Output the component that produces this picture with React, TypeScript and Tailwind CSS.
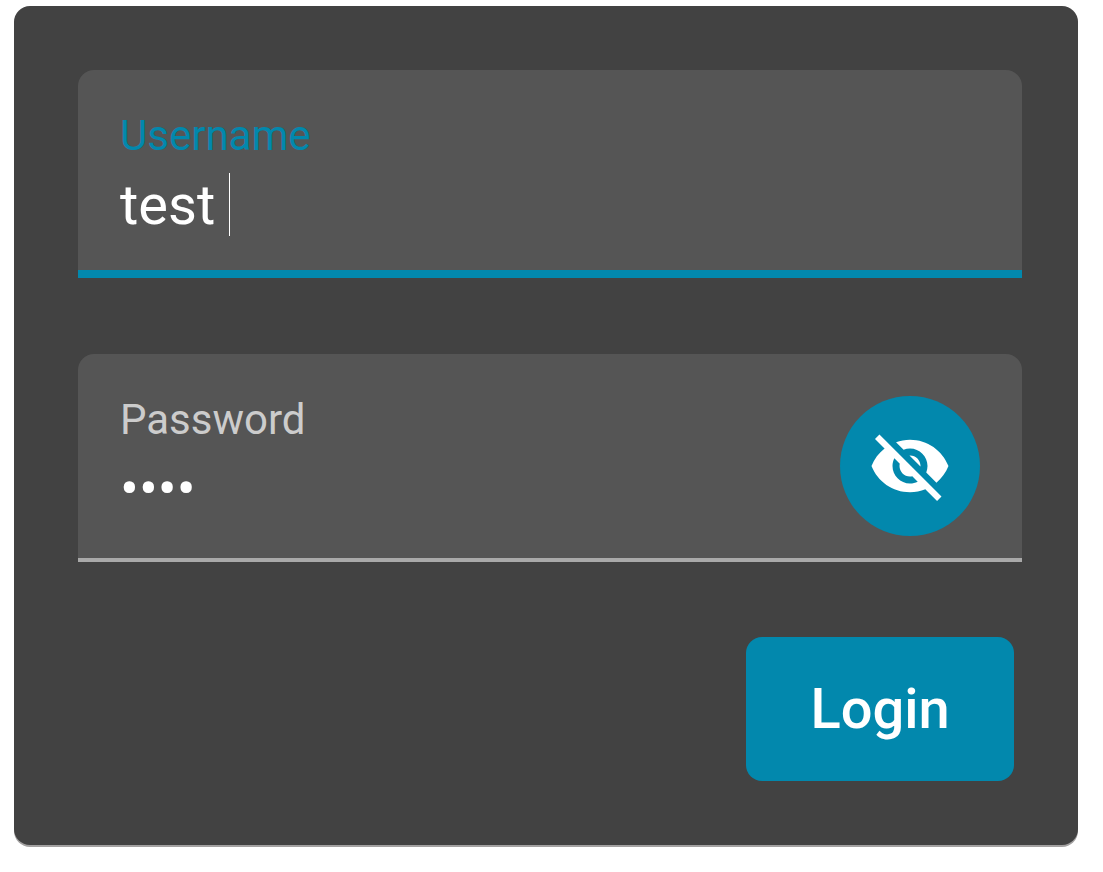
import { useState } from "react";
import type { FormEvent } from "react";

function VisibilityOffIcon() {
  return (
    <svg viewBox="0 0 24 24" className="size-21 fill-white" aria-hidden="true">
      <path d="M12 7c2.76 0 5 2.24 5 5 0 .65-.13 1.26-.36 1.83l2.92 2.92c1.51-1.26 2.7-2.89 3.43-4.75-1.73-4.39-6-7.5-11-7.5-1.4 0-2.74.25-3.98.7l2.16 2.16C10.74 7.13 11.35 7 12 7zM2 4.27l2.28 2.28.46.46C3.08 8.3 1.78 10.02 1 12c1.73 4.39 6 7.5 11 7.5 1.55 0 3.03-.3 4.38-.84l.42.42L19.73 22 21 20.73 3.27 3 2 4.27zM7.53 9.8l1.55 1.55c-.05.21-.08.43-.08.65 0 1.66 1.34 3 3 3 .22 0 .44-.03.65-.08l1.55 1.55c-.67.33-1.41.53-2.2.53-2.76 0-5-2.24-5-5 0-.79.2-1.53.53-2.2zm4.31-.78l3.15 3.15.02-.16c0-1.66-1.34-3-3-3l-.17.01z" />
    </svg>
  );
}

function VisibilityIcon() {
  return (
    <svg viewBox="0 0 24 24" className="size-21 fill-white" aria-hidden="true">
      <path d="M12 4.5C7 4.5 2.73 7.61 1 12c1.73 4.39 6 7.5 11 7.5s9.27-3.11 11-7.5c-1.73-4.39-6-7.5-11-7.5zM12 17c-2.76 0-5-2.24-5-5s2.24-5 5-5 5 2.24 5 5-2.24 5-5 5zm0-8c-1.66 0-3 1.34-3 3s1.34 3 3 3 3-1.34 3-3-1.34-3-3-3z" />
    </svg>
  );
}

export default function App() {
  const [username, setUsername] = useState("test ");
  const [password, setPassword] = useState("test");
  const [visible, setVisible] = useState(false);

  return (
    <main className="bg-white pt-1.5 pr-[25px] pb-6 pl-3.5 font-[Roboto,sans-serif]">
      <form
        onSubmit={(event: FormEvent) => event.preventDefault()}
        className="flex flex-col rounded-2xl bg-[#424242] pt-16 pr-14 pb-16 pl-16 shadow-[0_2px_0_#a3a1a1]"
      >
        <div className="flex min-h-52 flex-col rounded-t-2xl border-b-8 border-[#0288ad] bg-[#555555] px-[42px] pt-[42px]">
          <label htmlFor="username" className="text-[42px] leading-12 text-[#0288ad]">
            Username
          </label>
          <div className="relative mt-[13px] flex">
            <input
              id="username"
              type="text"
              value={username}
              onChange={(event) => setUsername(event.target.value)}
              className="h-16 w-full min-w-0 bg-transparent text-[56px] leading-16 text-white caret-transparent outline-none"
            />
            <span className="pointer-events-none absolute top-0 left-0 flex h-16 text-[56px] leading-16" aria-hidden="true">
              <span className="invisible whitespace-pre">{username}</span>
              <span className="h-[63px] w-px bg-white" />
            </span>
          </div>
        </div>

        <div className="mt-19 flex min-h-52 rounded-t-2xl border-b-4 border-[#a9a9a9] bg-[#555555] px-[42px] pt-[42px]">
          <div className="flex min-w-0 flex-1 flex-col">
            <label htmlFor="password" className="text-[42px] leading-12 text-[#cccccc]">
              Password
            </label>
            <input
              id="password"
              type={visible ? "text" : "password"}
              value={password}
              onChange={(event) => setPassword(event.target.value)}
              className="mt-[13px] h-16 w-full min-w-0 bg-transparent text-[56px] leading-16 text-white outline-none"
            />
          </div>
          <button
            type="button"
            aria-label={visible ? "Hide password" : "Show password"}
            onClick={() => setVisible(!visible)}
            className="flex size-35 shrink-0 items-center justify-center rounded-full bg-[#0288ad]"
          >
            {visible ? <VisibilityIcon /> : <VisibilityOffIcon />}
          </button>
        </div>

        <button
          type="submit"
          className="mt-[75px] mr-2 min-w-67 self-end rounded-2xl bg-[#0288ad] px-16 py-10 text-[56px] leading-16 font-medium text-white"
        >
          Login
        </button>
      </form>
    </main>
  );
}
